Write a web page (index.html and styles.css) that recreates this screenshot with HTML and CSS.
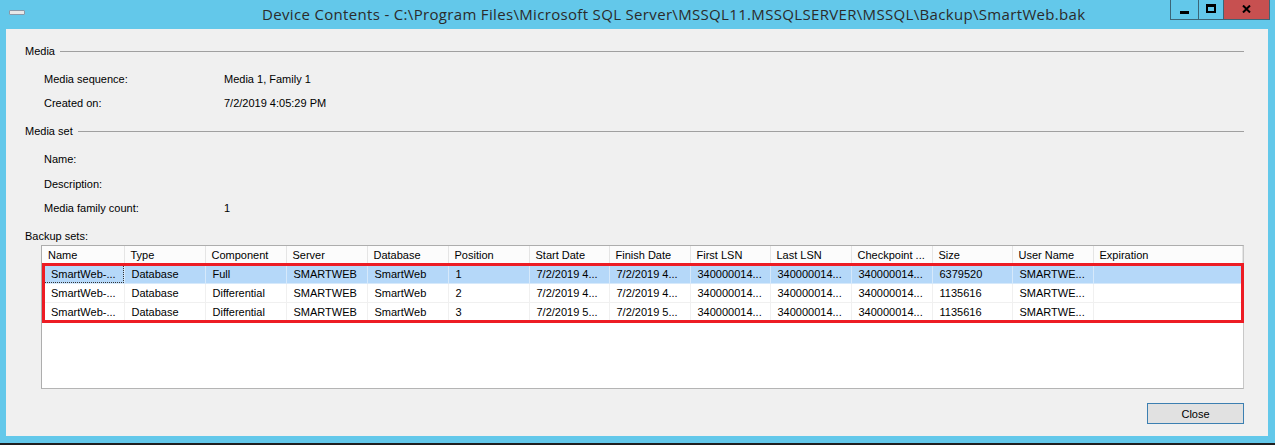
FILE: index.html
```html
<!DOCTYPE html>
<html>
<head>
<meta charset="utf-8">
<link rel="stylesheet" href="styles.css">
</head>
<body>
<div class="window">
  <div class="titlebar">
    <div class="app-icon"></div>
    <div class="title">Device Contents - C:\Program Files\Microsoft SQL Server\MSSQL11.MSSQLSERVER\MSSQL\Backup\SmartWeb.bak</div>
    <div class="controls">
      <div class="ctl ctl-min"><span class="min-glyph"></span></div>
      <div class="ctl ctl-max"><span class="max-glyph"></span></div>
      <div class="ctl ctl-close"><svg width="9" height="8" viewBox="0 0 9 8"><path d="M1 0.5 L8 7.5 M8 0.5 L1 7.5" stroke="#000" stroke-width="2"/></svg></div>
    </div>
  </div>
  <div class="client">
    <div class="group-head g-media"><span>Media</span><div class="rule"></div></div>
    <div class="field f-seq"><span class="lbl">Media sequence:</span><span>Media 1, Family 1</span></div>
    <div class="field f-created"><span class="lbl">Created on:</span><span>7/2/2019 4:05:29 PM</span></div>
    <div class="group-head g-set"><span>Media set</span><div class="rule"></div></div>
    <div class="field f-name"><span class="lbl">Name:</span><span></span></div>
    <div class="field f-desc"><span class="lbl">Description:</span><span></span></div>
    <div class="field f-count"><span class="lbl">Media family count:</span><span>1</span></div>
    <div class="backup-label">Backup sets:</div>
    <div class="listview">
      <table class="grid">
        <colgroup>
          <col class="c82"><col class="c81"><col class="c81"><col class="c81"><col class="c81"><col class="c81"><col class="c80"><col class="c81"><col class="c80"><col class="c81"><col class="c81"><col class="c80"><col class="c81"><col>
        </colgroup>
        <thead>
          <tr><th>Name</th><th>Type</th><th>Component</th><th>Server</th><th>Database</th><th>Position</th><th>Start Date</th><th>Finish Date</th><th>First LSN</th><th>Last LSN</th><th>Checkpoint ...</th><th>Size</th><th>User Name</th><th>Expiration</th></tr>
        </thead>
        <tbody>
          <tr class="sel"><td class="first focus">SmartWeb-...</td><td>Database</td><td>Full</td><td>SMARTWEB</td><td>SmartWeb</td><td>1</td><td>7/2/2019 4...</td><td>7/2/2019 4...</td><td>340000014...</td><td>340000014...</td><td>340000014...</td><td>6379520</td><td>SMARTWE...</td><td></td></tr>
          <tr><td class="first">SmartWeb-...</td><td>Database</td><td>Differential</td><td>SMARTWEB</td><td>SmartWeb</td><td>2</td><td>7/2/2019 4...</td><td>7/2/2019 4...</td><td>340000014...</td><td>340000014...</td><td>340000014...</td><td>1135616</td><td>SMARTWE...</td><td></td></tr>
          <tr><td class="first">SmartWeb-...</td><td>Database</td><td>Differential</td><td>SMARTWEB</td><td>SmartWeb</td><td>3</td><td>7/2/2019 5...</td><td>7/2/2019 5...</td><td>340000014...</td><td>340000014...</td><td>340000014...</td><td>1135616</td><td>SMARTWE...</td><td></td></tr>
        </tbody>
      </table>
      <div class="highlight"></div>
    </div>
    <div class="button-row"><button class="btn">Close</button></div>
  </div>
</div>
</body>
</html>
```

FILE: styles.css
```css
html, body {
  margin: 0;
  padding: 0;
}
body {
  background: #1f1f1f;
  width: 1275px;
  height: 445px;
  overflow: hidden;
  font-family: "Liberation Sans", Arial, sans-serif;
  font-size: 11px;
  color: #000;
}
.window {
  width: 1275px;
  height: 443px;
  background: #63c8ea;
  display: flex;
  flex-direction: column;
  box-sizing: border-box;
}
.titlebar {
  height: 29px;
  display: flex;
  align-items: flex-start;
  position: relative;
}
.app-icon {
  width: 14px;
  height: 3px;
  margin: 10px 0 0 9px;
  background: #e8e8e8;
  border: 1px solid #8a98a8;
  border-radius: 1px;
}
.title {
  margin-left: 237px;
  margin-top: 4px;
  font-family: "Open Sans", "Noto Sans", sans-serif;
  font-size: 15px;
  letter-spacing: 0.33px;
  line-height: 20px;
  color: #2b2b2b;
  white-space: nowrap;
}
.controls {
  margin-left: auto;
  margin-right: 5px;
  display: flex;
  height: 20px;
  border: 1px solid #3b6577;
  border-top: none;
  box-sizing: border-box;
}
.ctl {
  height: 19px;
  display: flex;
  align-items: center;
  justify-content: center;
}
.ctl-min {
  width: 27px;
  border-right: 1px solid #3b6577;
}
.ctl-max {
  width: 24px;
  border-right: 1px solid #3b6577;
}
.ctl-close {
  width: 45px;
  background: #c75050;
}
.min-glyph {
  width: 9px;
  height: 3px;
  background: #000;
  margin-top: 6px;
}
.max-glyph {
  width: 6px;
  height: 4px;
  border: 2px solid #000;
  border-top-width: 3px;
  margin-bottom: 3px;
}
.ctl-close svg {
  display: block;
  margin-bottom: 2px;
}
.client {
  margin: 0 7px 0 6px;
  height: 407px;
  background: #f0f0f0;
  padding: 10px 24px 0 19px;
  box-sizing: border-box;
  display: flex;
  flex-direction: column;
}
.group-head {
  height: 24px;
  display: flex;
  align-items: center;
}
.group-head span {
  line-height: 13px;
}
.rule {
  flex: 1;
  height: 1px;
  background: #a0a0a0;
  margin-left: 5px;
  margin-top: 1px;
}
.g-set {
  margin-top: 4px;
}
.field {
  height: 24px;
  display: flex;
  align-items: center;
  padding-left: 19px;
}
.field .lbl {
  width: 180px;
}
.f-seq { margin-top: 4px; }
.f-name { margin-top: 4px; }
.f-desc { margin-top: 1px; }
.backup-label {
  margin-top: 7px;
  height: 18px;
  line-height: 18px;
}
.listview {
  position: relative;
  margin-left: 16px;
  height: 144px;
  background: #fff;
  border: 1px solid #adadad;
  border-right-color: #c8c8c8;
  border-bottom-color: #b4b4b4;
  box-sizing: border-box;
}
.grid {
  border-collapse: collapse;
  table-layout: fixed;
  width: 100%;
}
.c82 { width: 82px; }
.c81 { width: 81px; }
.c80 { width: 80px; }
.grid th {
  height: 18px;
  padding: 0 0 0 6px;
  text-align: left;
  font-weight: normal;
  background: #fcfcfc;
  border-right: 1px solid #e5e5e5;
  border-bottom: 1px solid #e5e5e5;
  white-space: nowrap;
  overflow: hidden;
  box-sizing: border-box;
}
.grid td {
  height: 19px;
  padding: 0 0 0 7px;
  border-right: 1px solid #f0f0f0;
  border-bottom: 1px solid #f0f0f0;
  white-space: nowrap;
  overflow: hidden;
  box-sizing: border-box;
}
.grid td.first {
  padding-left: 9px;
}
.grid tr.sel td {
  background: #b5d8f9;
  border-right-color: #d6e9fb;
  border-bottom-color: #d6e9fb;
}
.grid td.focus {
  outline: 1px dotted #333;
  outline-offset: -1px;
}
.highlight {
  position: absolute;
  left: 0;
  top: 17px;
  right: -1px;
  height: 60px;
  border: 3px solid #ed1c24;
  box-sizing: border-box;
  pointer-events: none;
}
.button-row {
  display: flex;
  justify-content: flex-end;
  margin-top: 14px;
}
.btn {
  width: 97px;
  height: 21px;
  margin-right: 0;
  background: #e1e1e1;
  border: 1px solid #3c7fb1;
  font-family: "Liberation Sans", Arial, sans-serif;
  font-size: 11px;
  color: #000;
  padding: 0;
}
```
